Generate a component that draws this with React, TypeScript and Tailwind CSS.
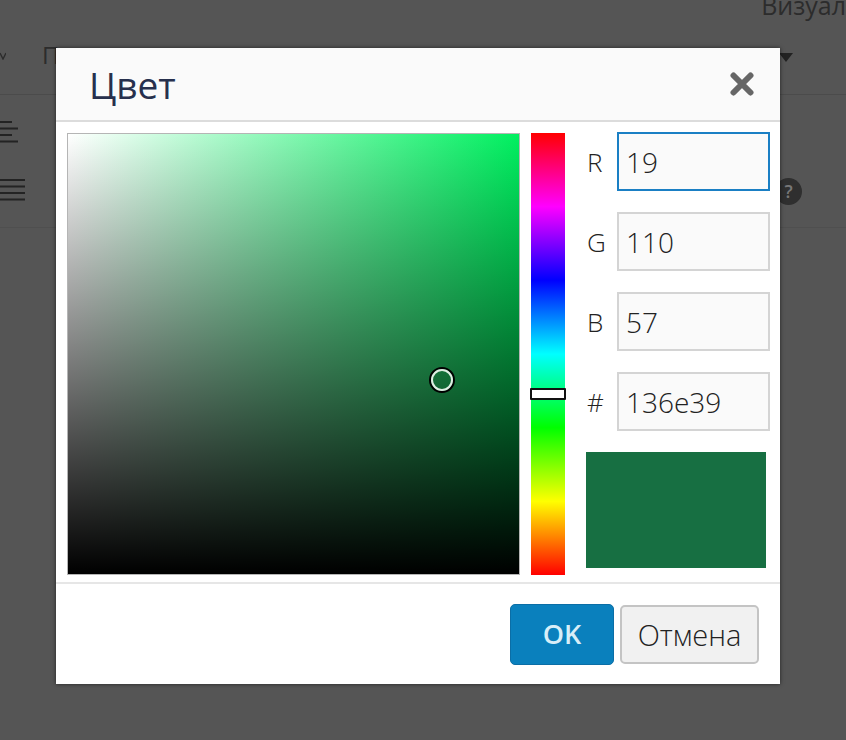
const fieldRows = [
  { label: 'R', value: '19', focused: true },
  { label: 'G', value: '110', focused: false },
  { label: 'B', value: '57', focused: false },
  { label: '#', value: '136e39', focused: false },
];

function LinesIcon({ width, rows }: { width: number; rows: number[] }) {
  return (
    <svg width={width} height={28} viewBox={`0 0 ${width} 28`} className="block">
      {rows.map((w, i) => (
        <rect key={i} x={0} y={2 + i * 6.5} width={w} height={2} fill="#232323" />
      ))}
    </svg>
  );
}

function Background() {
  return (
    <div className="flex h-[740px] w-[846px] flex-col overflow-hidden bg-[#555555] font-['Open_Sans',sans-serif] text-[#222]">
      <div className="flex h-[22px] items-start justify-end">
        <span className="whitespace-nowrap text-[25px] leading-[11px] text-[#2c2c2c]">Визуал</span>
      </div>
      <div className="flex h-[73px] items-center border-b border-[#4b4b4b] pb-[6px]">
        <svg width="6" height="8" viewBox="0 0 6 8" className="mt-[2px]">
          <path d="M0 1 L3 7 L6 1" fill="none" stroke="#2c2c2c" strokeWidth="1.4" />
        </svg>
        <span className="ml-[36px] text-[24px] leading-none text-[#2c2c2c]">П</span>
        <svg width="14" height="9" viewBox="0 0 14 9" className="ml-[720px] mt-[4px]">
          <path d="M0 0 H14 L7 9 Z" fill="#222" />
        </svg>
      </div>
      <div className="flex h-[133px] justify-between border-b border-[#4f4f4f]">
        <div className="flex flex-col gap-[30px] pt-[24px]">
          <LinesIcon width={18} rows={[12, 18, 12, 18]} />
          <LinesIcon width={25} rows={[25, 25, 25, 25]} />
        </div>
        <div className="mr-[44px] mt-[83px] flex h-[27px] w-[27px] items-center justify-center rounded-full bg-[#2f2f2f] text-[18px] font-semibold text-[#777]">
          ?
        </div>
      </div>
    </div>
  );
}

export default function App() {
  return (
    <div className="relative h-[740px] w-[846px] overflow-hidden font-['Open_Sans',sans-serif]">
      <Background />

      {/* Dialog */}
      <div className="absolute left-[56px] top-[48px] flex h-[636px] w-[724px] flex-col bg-white shadow-[0_0_4px_rgba(0,0,0,0.6)]">
        <div className="flex h-[74px] shrink-0 items-center justify-between border-b-2 border-[#dcdcdc] bg-[#fafafa] pl-[33px] pr-[26px]">
          <h2 className="text-[37px] leading-none text-[#27304d]">Цвет</h2>
          <svg width="24" height="24" viewBox="0 0 24 24">
            <path d="M3.5 3.5 L20.5 20.5 M20.5 3.5 L3.5 20.5" stroke="#666666" strokeWidth="6" strokeLinecap="round" />
          </svg>
        </div>

        <div className="flex h-[462px] shrink-0 border-b-2 border-[#e6e6e6] pl-[11px] pt-[11px]">
          <div className="relative h-[442px] w-[453px] shrink-0 border border-[#b5b5b5] bg-[linear-gradient(to_top,#000,transparent),linear-gradient(to_right,#fff,#00f060)]">
            <div className="absolute left-[361px] top-[233px] h-[26px] w-[26px] rounded-full border-2 border-black">
              <div className="h-full w-full rounded-full border-2 border-[#dfeee3]" />
            </div>
          </div>

          <div className="relative ml-[11px] h-[442px] w-[34px] shrink-0 bg-[linear-gradient(to_bottom,#ff0000,#ff00ff,#0000ff,#00ffff,#00ff00,#ffff00,#ff0000)]">
            <div className="absolute left-[-1px] top-[255px] h-[12px] w-[36px] rounded-[1px] border-2 border-[#111] bg-white" />
          </div>

          <div className="ml-[21px] mt-[-1px] flex w-[184px] shrink-0 flex-col gap-[21px]">
            {fieldRows.map((row) => (
              <div key={row.label} className="flex items-center">
                <label className="w-[31px] pl-[1px] text-[26px] font-light leading-none text-[#222]">{row.label}</label>
                <input
                  readOnly
                  value={row.value}
                  className={
                    row.focused
                      ? 'h-[59px] w-[153px] border-2 border-[#1a7fc4] bg-[#fafafa] pl-[7px] text-[28px] font-light text-[#222] outline-none'
                      : 'h-[59px] w-[153px] border-2 border-[#d4d4d4] bg-[#fafafa] pl-[7px] text-[28px] font-light text-[#222] outline-none'
                  }
                />
              </div>
            ))}
            <div className="h-[116px] w-[180px] bg-[#176f42]" />
          </div>
        </div>

        <div className="flex flex-1 items-start justify-end gap-[6px] pr-[21px] pt-[20px]">
          <button className="h-[61px] w-[104px] rounded-[5px] border border-[#0b6ea6] bg-[#0a80bd] text-[27px] font-semibold text-[#d8eef8]">
            OK
          </button>
          <button className="mt-[1px] h-[59px] w-[139px] rounded-[5px] border-2 border-[#c4c4c4] bg-[#f1f1f1] text-[29px] font-light text-[#222]">
            Отмена
          </button>
        </div>
      </div>
    </div>
  );
}
